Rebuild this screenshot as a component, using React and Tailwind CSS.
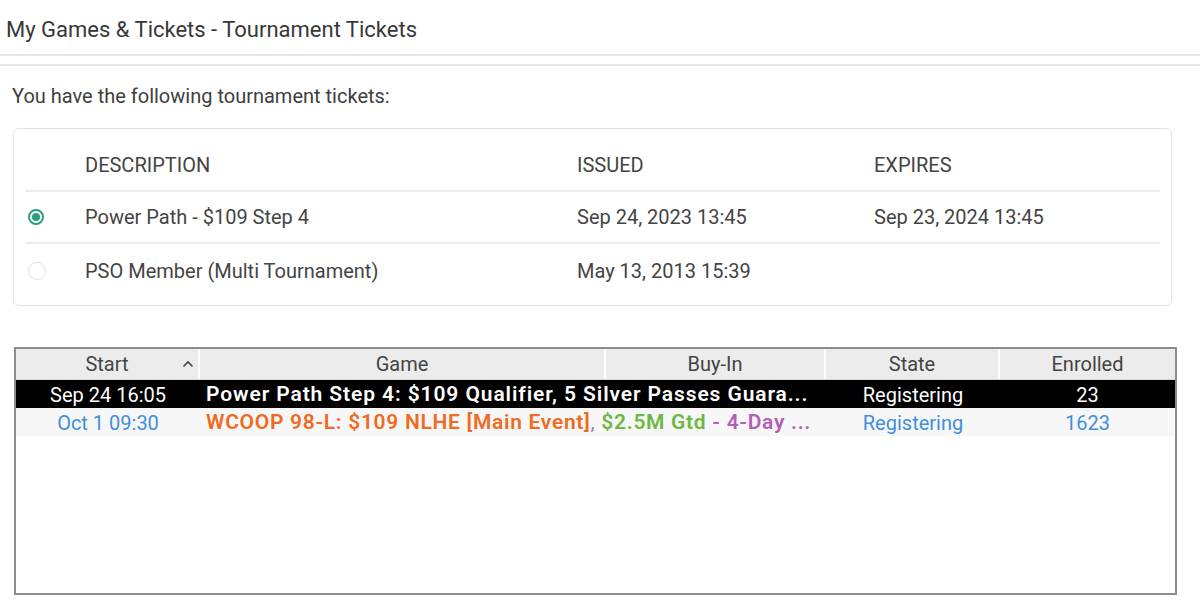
import React from "react";

const tickets = [
  { desc: "Power Path - $109 Step 4", issued: "Sep 24, 2023 13:45", expires: "Sep 23, 2024 13:45", checked: true },
  { desc: "PSO Member (Multi Tournament)", issued: "May 13, 2013 15:39", expires: "", checked: false },
];

const Radio = ({ checked }) =>
  checked ? (
    <span className="w-[16px] h-[16px] rounded-full border-2 border-[#2a9d7f] flex items-center justify-center">
      <span className="w-[8px] h-[8px] rounded-full bg-[#2a9d7f]" />
    </span>
  ) : (
    <span className="w-[18px] h-[18px] rounded-full border border-[#e2e2e2]" />
  );

const App = () => {
  return (
    <div className="w-[1200px] h-[604px] bg-white overflow-hidden font-['Roboto',sans-serif] text-[#3a3a3a]">
      {/* Title bar */}
      <div className="h-[56px] flex items-center pl-[6px] pt-[6px] border-b-2 border-[#e6e6e6]">
        <h1 className="text-[22px] leading-[26px] text-[#383838]">My Games &amp; Tickets - Tournament Tickets</h1>
      </div>

      <div className="mt-[8px] border-t-2 border-[#e6e6e6] pt-[18px]">
        <p className="pl-[12px] text-[20px] leading-[24px] text-[#404040]">
          You have the following tournament tickets:
        </p>

        {/* Tickets card */}
        <div className="ml-[13px] mt-[20px] w-[1159px] h-[178px] border border-[#e3e3e3] rounded-[6px] px-[11px] text-[20px] text-[#444]">
          <div className="grid grid-cols-[60px_492px_297px_1fr] h-[63px] items-center pt-[10px] border-b-2 border-[#ececec]">
            <span />
            <span>DESCRIPTION</span>
            <span>ISSUED</span>
            <span>EXPIRES</span>
          </div>
          {tickets.map((t, i) => (
            <div
              key={t.desc}
              className={`grid grid-cols-[60px_492px_297px_1fr] items-center ${
                i === 0 ? "h-[52px] border-b-2 border-[#ececec]" : "h-[54px]"
              }`}
            >
              <span className="pl-[3px] flex">
                <Radio checked={t.checked} />
              </span>
              <span>{t.desc}</span>
              <span>{t.issued}</span>
              <span>{t.expires}</span>
            </div>
          ))}
        </div>

        {/* Tournament list */}
        <div className="ml-[14px] mt-[41px] w-[1163px] h-[248px] border-2 border-[#8c8c8c] text-[20px]">
          <div className="grid grid-cols-[184px_406px_220px_174px_1fr] h-[31px] bg-[#ececec] text-[#444] border-b border-[#d8d8d8]">
            <div className="relative flex items-center justify-center border-r-2 border-white">
              Start
              <svg className="absolute right-[4px] top-[11px]" width="12" height="8" viewBox="0 0 12 8">
                <polyline points="1.5,6.5 6,2 10.5,6.5" fill="none" stroke="#444" strokeWidth="1.6" />
              </svg>
            </div>
            <div className="flex items-center justify-center border-r-2 border-white">Game</div>
            <div className="flex items-center justify-center border-r-2 border-white">Buy-In</div>
            <div className="flex items-center justify-center border-r-2 border-white">State</div>
            <div className="flex items-center justify-center">Enrolled</div>
          </div>

          <div className="grid grid-cols-[184px_626px_174px_1fr] h-[28px] bg-black text-white items-center">
            <span className="text-center">Sep 24 16:05</span>
            <span className="pl-[6px] font-semibold text-[21px] tracking-[0.9px] whitespace-nowrap overflow-hidden">
              Power Path Step 4: $109 Qualifier, 5 Silver Passes Guara...
            </span>
            <span className="text-center">Registering</span>
            <span className="text-center">23</span>
          </div>

          <div className="grid grid-cols-[184px_626px_174px_1fr] h-[28px] bg-[#f7f7f7] items-center">
            <span className="text-center text-[#3f8fdc]">Oct 1 09:30</span>
            <span className="pl-[6px] font-semibold text-[21px] tracking-[0.7px] whitespace-nowrap overflow-hidden">
              <span className="text-[#f06a22]">WCOOP 98-L: $109 NLHE [Main Event]</span>
              <span className="text-[#8a8a8a] font-normal">,</span>{" "}
              <span className="text-[#6cb842]">$2.5M Gtd</span>{" "}
              <span className="text-[#b45fb4]">- 4-Day ...</span>
            </span>
            <span className="text-center text-[#3f8fdc]">Registering</span>
            <span className="text-center text-[#3f8fdc]">1623</span>
          </div>
        </div>
      </div>
    </div>
  );
};

export default App;
